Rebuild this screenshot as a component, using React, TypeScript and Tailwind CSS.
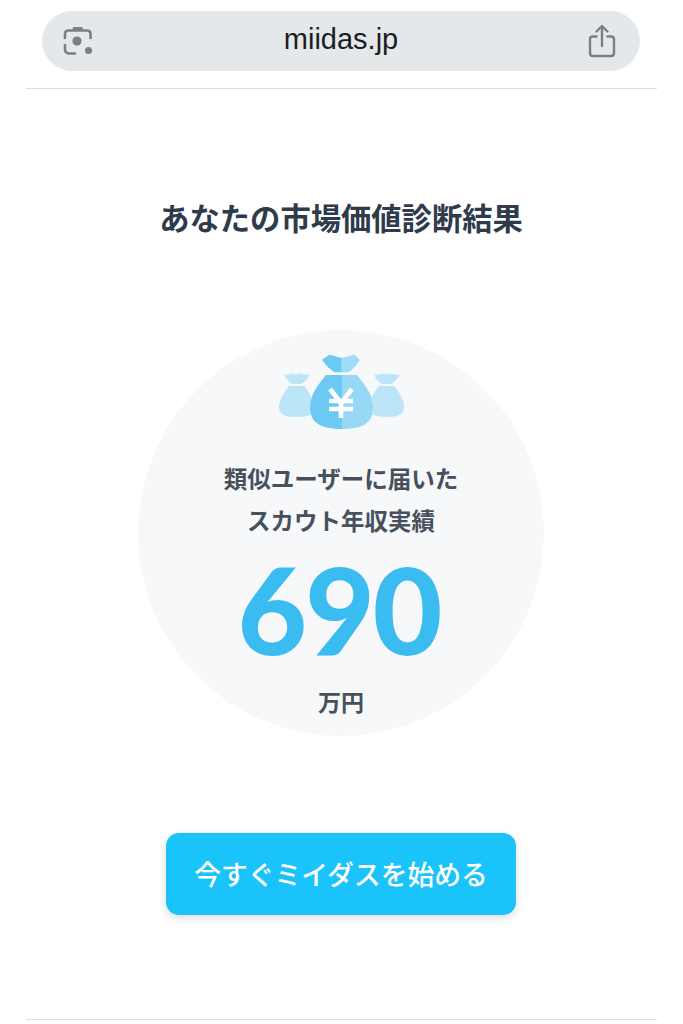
const jp = { fontFamily: '"Noto Sans CJK JP", "Noto Sans", sans-serif' };

// Three money bags: two pale ones behind a larger bag with a yen mark.
function MoneyBags() {
  const sideBag = (dx: number) => (
    <g transform={`translate(${dx} 0)`} fill="#bde5f8">
      <path d="M6 21 C10 22 12 20 14 20 C16 21 19 21 21 20 C23 20 26 22 30 21 C29 24 25 28 22 29.5 H13 C10 28 7 24 6 21 Z" stroke="#bde5f8" strokeWidth="1" strokeLinejoin="round" />
      <path d="M10 32 H25 C30 38 35 46 35 53 C35 60 30 63 17.5 63 C5 63 0 60 0 53 C0 46 5 38 10 32 Z" />
    </g>
  );
  return (
    <svg viewBox="0 0 126 76" className="w-[126px] h-[76px]">
      {sideBag(0)}
      {sideBag(90)}
      <path d="M46 21 H79 C86 30 94 40 94 53 C94 70 82 77 63 77 C44 77 31 70 31 53 C31 40 39 30 46 21 Z" fill="#f6f8fa" />
      <path d="M44 6 L51 1.5 C56 2.5 60 4.5 63 4.5 V17.5 H56 C51 15 47 10 44 6 Z" fill="#6bc9f3" stroke="#6bc9f3" strokeWidth="1.5" strokeLinejoin="round" />
      <path d="M63 4.5 C66 4.5 70 2.5 75 1.5 L80 6 C77 10 74 15 69 17.5 H63 Z" fill="#9edcf7" stroke="#9edcf7" strokeWidth="1.5" strokeLinejoin="round" />
      <path d="M47 21 H63 V75 C42 75 31 69 31 53 C31 41 39 31 47 21 Z" fill="#6bc9f3" />
      <path d="M63 21 H78 C86 31 94 41 94 53 C94 69 84 75 63 75 Z" fill="#97d8f6" />
      <g fill="none" stroke="#ffffff" strokeWidth="4.6">
        <path d="M51 35 L62 49 L73 35" />
        <path d="M50 47 H74 M50 55 H74 M62 48 V64" />
      </g>
    </svg>
  );
}

export default function App() {
  return (
    <div className="w-[683px] h-[1024px] bg-white flex flex-col items-center overflow-hidden" style={jp}>
      <div className="w-[631px] h-[89px] pt-[11px] flex flex-col items-center border-b border-[#dcdee0] shrink-0">
        <div className="w-[598px] h-[60px] mr-[1px] rounded-[30px] bg-[#e5e8eb] flex items-center justify-between pl-[20px] pr-[24px]">
          <svg width="32" height="34" viewBox="0 0 32 34" fill="none">
            <path d="M3 14 V9.5 C3 7.5 4.5 6.5 6.5 6.5 H25 C27 6.5 28.5 7.5 28.5 9.5 V14" stroke="#7b8084" strokeWidth="2.6" strokeLinecap="round" />
            <path d="M3 21 V25 C3 28 5 29.5 7.5 29.5 H13" stroke="#7b8084" strokeWidth="2.6" strokeLinecap="round" />
            <path d="M10 6 L11.5 3 H20 L21.5 6 Z" fill="#7b8084" />
            <circle cx="15" cy="17" r="4.6" fill="#7b8084" />
            <circle cx="26.5" cy="26.5" r="3.6" fill="#7b8084" />
          </svg>
          <span className="text-[29px] leading-none text-[#1b1d20] -mt-[3px]" style={{ fontFamily: '"Liberation Sans", Arial, sans-serif' }}>
            miidas.jp
          </span>
          <svg width="28" height="34" viewBox="0 0 28 34" fill="none" stroke="#7b8084" strokeWidth="2.4" strokeLinecap="round" strokeLinejoin="round">
            <path d="M8.5 12.5 H5 C3 12.5 2 13.5 2 15.5 V29 C2 31 3 32 5 32 H23 C25 32 26 31 26 29 V15.5 C26 13.5 25 12.5 23 12.5 H19.5" />
            <path d="M14 22 V3" />
            <path d="M8.5 7.5 L14 2 L19.5 7.5" />
          </svg>
        </div>
      </div>

      <h1 className="mt-[107px] mr-[1px] text-[30.3px] leading-[42px] font-bold text-[#2f3a4b] shrink-0">あなたの市場価値診断結果</h1>

      <div className="mt-[92px] mr-[1px] w-[406px] h-[406px] rounded-full bg-[#f6f8fa] flex flex-col items-center shrink-0">
        <div className="mt-[24px] ml-[1px] w-[126px] h-[76px] shrink-0">
          <MoneyBags />
        </div>
        <p className="mt-[27px] text-[23.5px] leading-[42px] font-bold text-[#47505c] text-center">
          類似ユーザーに届いた
          <br />
          スカウト年収実績
        </p>
        <p className="mt-[10px] mr-[4px] h-[116px] text-[120px] leading-[116px] font-black text-[#3abcf0] tracking-[-2px]" style={{ fontFamily: 'Lato, sans-serif' }}>
          690
        </p>
        <p className="mt-[19px] text-[23px] leading-[30px] font-bold text-[#47505c]">万円</p>
      </div>

      <button className="mt-[97px] mr-[1px] w-[350px] h-[82px] rounded-[13px] bg-[#1bc3fb] text-white text-[26.8px] font-medium shadow-[0_3px_8px_rgba(0,0,0,0.14)] shrink-0" style={jp}>
        今すぐミイダスを始める
      </button>

      <div className="mt-[104px] w-[631px] border-t border-[#dcdee0] shrink-0" />
    </div>
  );
}
